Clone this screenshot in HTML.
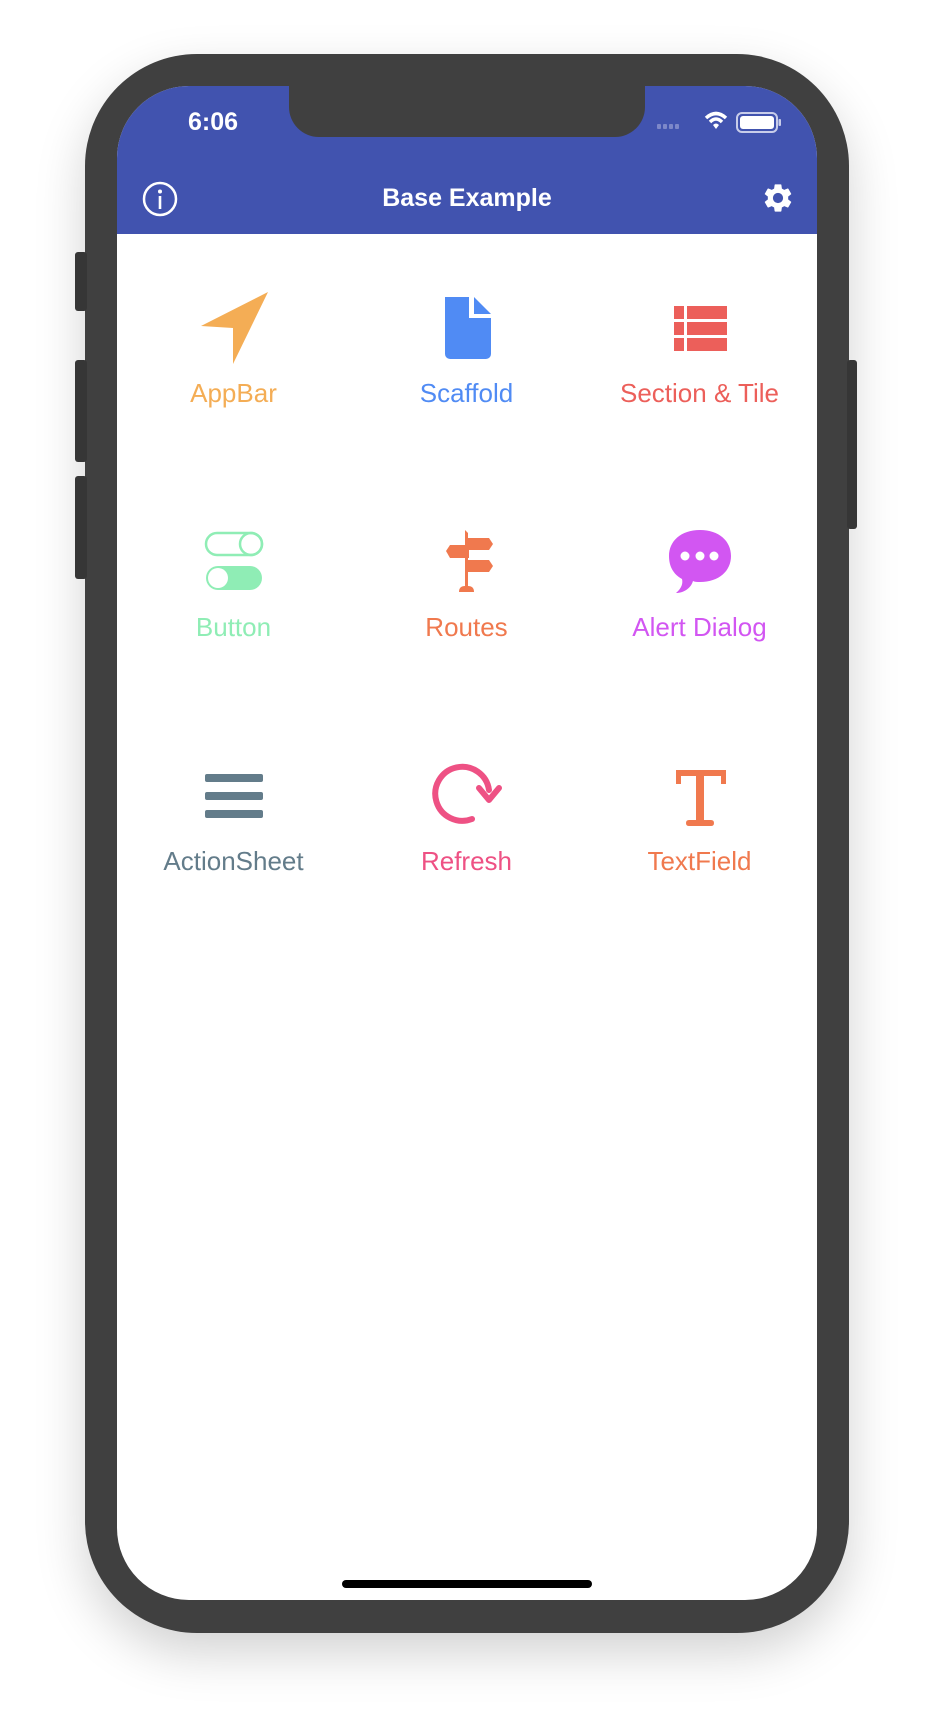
<!DOCTYPE html>
<html><head><meta charset="utf-8"><style>
html,body{margin:0;padding:0;background:#fff;}
body{width:934px;height:1718px;position:relative;overflow:hidden;font-family:"Liberation Sans",sans-serif;}
.phone{position:absolute;left:85px;top:54px;width:764px;height:1579px;background:#404040;border-radius:112px;box-shadow:0 20px 50px rgba(0,0,0,0.18);}
.btn{position:absolute;background:#363636;border-radius:3px;}
.screen{position:absolute;left:117px;top:86px;width:700px;height:1514px;background:#fff;border-radius:72px;overflow:hidden;}
.nav{position:absolute;left:0;top:0;width:700px;height:148px;background:#4153AF;}
.notch{position:absolute;left:172px;top:0;width:356px;height:51px;background:#404040;border-radius:0 0 30px 30px;}
.time{position:absolute;left:60px;top:22px;width:72px;text-align:center;color:#fff;font-size:25px;font-weight:bold;}
.title{position:absolute;left:0;width:700px;top:98px;text-align:center;color:#fff;font-size:25px;font-weight:bold;}
.cell{position:absolute;width:233px;text-align:center;font-size:26px;}
.cell svg{display:block;margin:0 auto;}
.home{position:absolute;left:225px;top:1494px;width:250px;height:8px;background:#000;border-radius:4px;}
</style></head><body>
<div class="phone"></div>
<div class="btn" style="left:75px;top:252px;width:12px;height:59px"></div>
<div class="btn" style="left:75px;top:360px;width:12px;height:102px"></div>
<div class="btn" style="left:75px;top:476px;width:12px;height:103px"></div>
<div class="btn" style="left:847px;top:360px;width:10px;height:169px"></div>
<div class="screen">
 <div class="nav"></div>
 <div class="notch"></div>
 <div class="time">6:06</div>
 <svg style="position:absolute;left:540px;top:22px" width="160" height="28" viewBox="0 0 160 28">
  <g fill="#7d88c9"><rect x="0" y="16" width="4" height="5" rx="1"/><rect x="6" y="16" width="4" height="5" rx="1"/><rect x="12" y="16" width="4" height="5" rx="1"/><rect x="18" y="16" width="4" height="5" rx="1"/></g>
  <path d="M49 10 Q59 1 69 10" stroke="#fff" stroke-width="3.5" fill="none"/>
  <path d="M53 14 Q59 8 65 14" stroke="#fff" stroke-width="3.5" fill="none"/>
  <path d="M56 17 L59 21 L62 17 Q59 14 56 17Z" fill="#fff"/>
  <rect x="80" y="5" width="40" height="19" rx="5" fill="none" stroke="#c8cdea" stroke-width="2"/>
  <rect x="83" y="8" width="34" height="13" rx="3" fill="#fff"/>
  <rect x="121.5" y="11" width="2.5" height="7" rx="1" fill="#c8cdea"/>
 </svg>
 <svg style="position:absolute;left:25px;top:95px" width="36" height="36" viewBox="0 0 36 36"><circle cx="18" cy="18" r="16" fill="none" stroke="#fff" stroke-width="2.5"/><circle cx="18" cy="10.5" r="2" fill="#fff"/><rect x="16.7" y="15" width="2.6" height="13" fill="#fff"/></svg>
 <div class="title">Base Example</div>
 <svg style="position:absolute;left:644px;top:95px" width="34" height="34" viewBox="0 0 24 24"><path fill="#fff" d="M19.14 12.94c.04-.3.06-.61.06-.94 0-.32-.02-.64-.07-.94l2.030-1.58a.49.49 0 0 0 .12-.61l-1.92-3.32a.49.49 0 0 0-.59-.22l-2.39.96c-.5-.38-1.03-.7-1.62-.94l-.36-2.54a.484.484 0 0 0-.48-.41h-3.84c-.24 0-.43.17-.47.41l-.36 2.54c-.59.24-1.13.57-1.62.94l-2.39-.96a.48.48 0 0 0-.59.22L2.74 8.87c-.12.21-.08.47.12.61l2.03 1.58c-.05.3-.09.63-.09.94s.02.64.07.94l-2.03 1.58a.49.49 0 0 0-.12.61l1.92 3.32c.12.22.37.29.59.22l2.39-.96c.5.38 1.03.7 1.62.94l.36 2.54c.05.24.24.41.48.41h3.84c.24 0 .44-.17.47-.41l.36-2.54c.59-.24 1.13-.56 1.62-.94l2.39.96c.22.08.47 0 .59-.22l1.92-3.32c.12-.22.07-.47-.12-.61l-2.01-1.58zM12 15.6A3.6 3.6 0 1 1 12 8.4a3.6 3.6 0 0 1 0 7.2z"/></svg>

 <div class="cell" style="left:0;top:206px;color:#F4AD55">
  <svg width="72" height="72" viewBox="0 0 72 72"><path d="M3 34 L70 0 L35 72 L35 36 Z" fill="#F4AD55"/></svg>
  <div style="margin-top:14px">AppBar</div></div>
 <div class="cell" style="left:233px;top:206px;color:#508BF4">
  <svg width="72" height="72" viewBox="0 0 72 72"><path d="M14 5 h24 v21 h22 v36 a5 5 0 0 1 -5 5 h-36 a5 5 0 0 1 -5 -5 z" fill="#508BF4"/><path d="M43 5 l17 17 h-17z" fill="#508BF4"/></svg>
  <div style="margin-top:14px">Scaffold</div></div>
 <div class="cell" style="left:466px;top:206px;color:#EC5F5A">
  <svg width="72" height="72" viewBox="0 0 72 72" fill="#EC5F5A"><rect x="10" y="14" width="10" height="13"/><rect x="23" y="14" width="40" height="13"/><rect x="10" y="30" width="10" height="13"/><rect x="23" y="30" width="40" height="13"/><rect x="10" y="46" width="10" height="13"/><rect x="23" y="46" width="40" height="13"/></svg>
  <div style="margin-top:14px">Section &amp; Tile</div></div>
 <div class="cell" style="left:0;top:440px;color:#8FEDB5">
  <svg width="72" height="72" viewBox="0 0 72 72"><rect x="8" y="7" width="56" height="22" rx="11" fill="none" stroke="#8FEDB5" stroke-width="2.5"/><circle cx="53" cy="18" r="11" fill="none" stroke="#8FEDB5" stroke-width="2.5"/><rect x="8" y="40" width="56" height="24" rx="12" fill="#8FEDB5"/><circle cx="20" cy="52" r="10" fill="#fff"/></svg>
  <div style="margin-top:14px">Button</div></div>
 <div class="cell" style="left:233px;top:440px;color:#F0794E">
  <svg width="72" height="72" viewBox="0 0 72 72" fill="#F0794E"><path d="M34 4 l3 3 v55 h-3z"/><path d="M34 12 h24 l4 6 l-4 6 h-24z"/><path d="M15 25 l4 -6 h19 v13 h-19z"/><path d="M34 34 h24 l4 6 l-4 6 h-24z"/><path d="M28 66 q0 -6 6 -6 h3 q6 0 6 6z"/></svg>
  <div style="margin-top:14px">Routes</div></div>
 <div class="cell" style="left:466px;top:440px;color:#D256F2">
  <svg width="72" height="72" viewBox="0 0 72 72"><path d="M36 4 C55 4 67 15 67 30 C67 45 55 56 36 56 C33 56 31 56 29 55 C27 62 20 67 12 67 C18 62 19 57 18 53 C9 48 5 40 5 30 C5 15 17 4 36 4Z" fill="#D256F2"/><circle cx="21" cy="30" r="4.5" fill="#fff"/><circle cx="36" cy="30" r="4.5" fill="#fff"/><circle cx="50" cy="30" r="4.5" fill="#fff"/></svg>
  <div style="margin-top:14px">Alert Dialog</div></div>
 <div class="cell" style="left:0;top:674px;color:#637C8A">
  <svg width="72" height="72" viewBox="0 0 72 72" fill="#637C8A"><rect x="7" y="14" width="58" height="8" rx="2"/><rect x="7" y="32" width="58" height="8" rx="2"/><rect x="7" y="50" width="58" height="8" rx="2"/></svg>
  <div style="margin-top:14px">ActionSheet</div></div>
 <div class="cell" style="left:233px;top:674px;color:#EE5184">
  <svg width="72" height="72" viewBox="0 0 72 72"><path d="M41 59 A 27 27 0 1 1 58 30" fill="none" stroke="#EE5184" stroke-width="6" stroke-linecap="round"/><path d="M48 28 L58 40 L68 28" fill="none" stroke="#EE5184" stroke-width="6" stroke-linecap="round" stroke-linejoin="round"/></svg>
  <div style="margin-top:14px">Refresh</div></div>
 <div class="cell" style="left:466px;top:674px;color:#F0794E">
  <svg width="72" height="72" viewBox="0 0 72 72" fill="#F0794E"><path d="M12 10 h50 v14 h-5 v-8 h-17 v44 h7 q3 0 3 3 q0 3 -3 3 h-22 q-3 0 -3 -3 q0 -3 3 -3 h7 v-44 h-15 v8 h-5z"/></svg>
  <div style="margin-top:14px">TextField</div></div>
 <div class="home"></div>
</div>
</body></html>
